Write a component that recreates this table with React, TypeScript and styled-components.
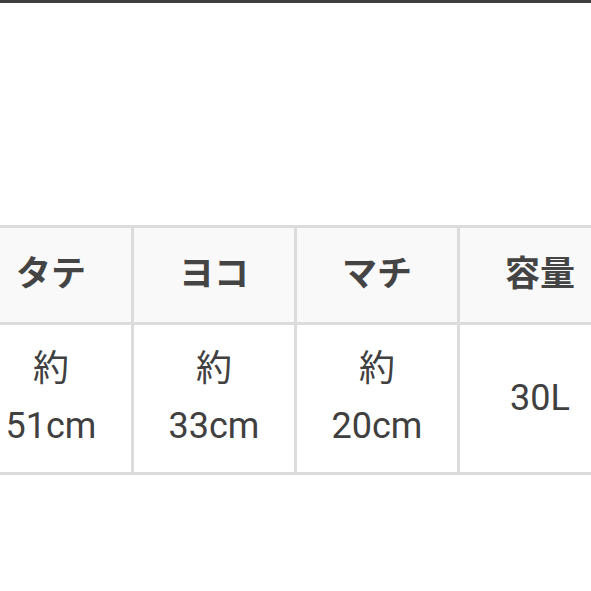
import React from 'react'
import styled, {createGlobalStyle} from 'styled-components'

const GlobalStyle = createGlobalStyle`
    html, body {
        margin: 0;
        padding: 0;
        background: #fff;
        overflow: hidden;
    }
    body {
        font-family: Roboto, "Noto Sans CJK JP", sans-serif;
        color: #444;
    }
`

const Page = styled.div`
    width: 591px;
    height: 591px;
    overflow: hidden;
    display: flex;
    flex-direction: column;
`
const TopBar = styled.div`
    height: 3px;
    background: #3e3e3e;
`
const SpecTable = styled.table`
    margin-top: 222px;
    margin-left: -32px;
    border-collapse: collapse;
    table-layout: fixed;
    width: 655px;
    flex-shrink: 0;
`
const HeadCell = styled.th`
    width: 160px;
    height: 57px;
    padding: 18px 0 19px;
    border: 3px solid #dcdcdc;
    background: #f9f9f9;
    font-size: 35px;
    font-weight: 700;
    line-height: 57px;
    text-align: center;
    color: #444;
`
const BodyCell = styled.td`
    height: 114px;
    padding: 16px 0 17px;
    border: 3px solid #dcdcdc;
    background: #fff;
    font-size: 36px;
    font-weight: 400;
    line-height: 57px;
    text-align: center;
    vertical-align: middle;
    color: #404040;
`

const specs = [
    {label: 'タテ', value: ['約', '51cm']},
    {label: 'ヨコ', value: ['約', '33cm']},
    {label: 'マチ', value: ['約', '20cm']},
    {label: '容量', value: ['30L']},
]

export default function App(): JSX.Element {
    return (
        <>
            <GlobalStyle />
            <Page>
                <TopBar />
                <SpecTable>
                    <thead>
                        <tr>
                            {specs.map(s => <HeadCell key={s.label}>{s.label}</HeadCell>)}
                        </tr>
                    </thead>
                    <tbody>
                        <tr>
                            {specs.map(s => (
                                <BodyCell key={s.label}>
                                    {s.value.map((line, i) => (
                                        <React.Fragment key={line}>
                                            {i > 0 && <br />}
                                            {line}
                                        </React.Fragment>
                                    ))}
                                </BodyCell>
                            ))}
                        </tr>
                    </tbody>
                </SpecTable>
            </Page>
        </>
    )
}
